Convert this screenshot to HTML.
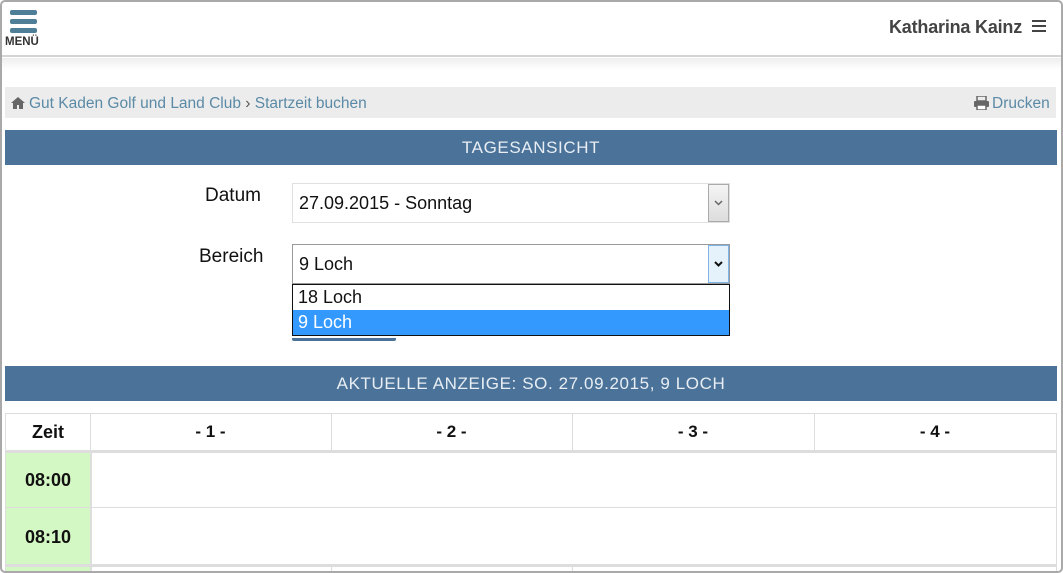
<!DOCTYPE html>
<html><head><meta charset="utf-8"><style>
*{box-sizing:border-box;margin:0;padding:0}
body{width:1063px;height:573px;overflow:hidden;background:#fff;font-family:"Liberation Sans","DejaVu Sans",sans-serif;position:relative}
.frame{position:absolute;left:0;top:0;width:1063px;height:573px;border:2px solid #a9a9a9;border-radius:5px;pointer-events:none;z-index:10}
.a{position:absolute}
.bar{background:#4b7399;color:#e8eef4;text-align:center;font-size:17px;letter-spacing:0.6px}
.sel{position:absolute;background:#fff;font-size:18px;color:#111;padding-left:6px}
.tc{position:absolute;font-weight:bold;font-size:17px;color:#111;text-align:center}
</style></head><body>
<div class="frame"></div>
<div class="a" style="left:0;top:0;width:1063px;height:57px;border-bottom:2px solid #d4d4d4"></div>
<div class="a" style="left:0;top:58px;width:1063px;height:12px;background:linear-gradient(#eee,#fff)"></div>
<div class="a" style="left:10px;top:10px;width:27px;height:5px;background:#4f7f96;border-radius:2px"></div>
<div class="a" style="left:10px;top:19px;width:27px;height:5px;background:#4f7f96;border-radius:2px"></div>
<div class="a" style="left:10px;top:28px;width:27px;height:5px;background:#4f7f96;border-radius:2px"></div>
<div class="a" style="left:5px;top:36px;font-size:11.5px;font-weight:bold;color:#333">MENÜ</div>
<div class="a" style="left:889px;top:17px;font-size:18px;font-weight:bold;color:#444;letter-spacing:-0.2px">Katharina Kainz</div>
<div class="a" style="left:1032px;top:20px;width:14px;height:2px;background:#444;box-shadow:0 5px 0 #444,0 10px 0 #444"></div>
<div class="a" style="left:5px;top:87px;width:1051px;height:31px;background:#ececec"></div>
<svg class="a" style="left:11px;top:97px" width="14" height="12" viewBox="0 0 14 12"><path d="M7 0L0 6h2v6h4V8h2v4h4V6h2z" fill="#666"/></svg>
<div class="a" style="left:29px;top:95px;font-size:15.5px;color:#5b8aa6">Gut Kaden Golf und Land Club <span style="color:#555">›</span> Startzeit buchen</div>
<svg class="a" style="left:974px;top:96px" width="15" height="14" viewBox="0 0 15 14"><rect x="3" y="0" width="9" height="5" fill="none" stroke="#666" stroke-width="1.5"/><rect x="0" y="5" width="15" height="6" rx="1" fill="#666"/><rect x="3" y="9" width="9" height="5" fill="#fff" stroke="#666" stroke-width="1.5"/></svg>
<div class="a" style="left:992px;top:95px;font-size:15.5px;color:#5b8aa6">Drucken</div>
<div class="a bar" style="left:5px;top:130px;width:1052px;height:35px;line-height:35px">TAGESANSICHT</div>
<div class="a" style="left:205px;top:185px;font-size:19px;color:#111">Datum</div>
<div class="a" style="left:199px;top:246px;font-size:19px;color:#111">Bereich</div>
<div class="sel" style="left:292px;top:183px;width:438px;height:40px;border:1px solid #e0e0e0;line-height:38px">27.09.2015 - Sonntag</div>
<div class="a" style="left:708px;top:184px;width:21px;height:38px;background:linear-gradient(#f4f4f4,#ddd);border:1px solid #aaa"><svg width="19" height="36"><path d="M6 16l3.5 3.5L13 16" fill="none" stroke="#666" stroke-width="1.5"/></svg></div>
<div class="sel" style="left:292px;top:244px;width:438px;height:40px;border:1px solid #999;line-height:38px">9 Loch</div>
<div class="a" style="left:708px;top:245px;width:21px;height:38px;background:#e5f1fb;border:1px solid #7eb4ea"><svg width="19" height="36"><path d="M6 16l3.5 3.5L13 16" fill="none" stroke="#111" stroke-width="2"/></svg></div>
<div class="a" style="left:292px;top:338px;width:104px;height:3px;background:#4b7399;border-radius:0 0 2px 2px"></div>
<div class="a" style="left:292px;top:284px;width:438px;height:52px;border:1px solid #111;background:#fff">
<div style="height:25px;line-height:25px;padding-left:5px;font-size:18px;color:#111">18 Loch</div>
<div style="height:25px;line-height:25px;padding-left:5px;font-size:18px;color:#fff;background:#3399ff">9 Loch</div>
</div>
<div class="a bar" style="left:5px;top:366px;width:1052px;height:35px;line-height:35px">AKTUELLE ANZEIGE: SO. 27.09.2015, 9 LOCH</div>
<div class="a" style="left:5px;top:413px;width:1052px;height:40px;border:1px solid #ddd;border-bottom:3px solid #ddd"></div>
<div class="a" style="left:90px;top:413px;width:1px;height:38px;background:#ddd"></div>
<div class="a" style="left:331px;top:413px;width:1px;height:38px;background:#ddd"></div>
<div class="a" style="left:572px;top:413px;width:1px;height:38px;background:#ddd"></div>
<div class="a" style="left:814px;top:413px;width:1px;height:38px;background:#ddd"></div>
<div class="tc" style="left:6px;top:422px;width:84px;font-size:18px">Zeit</div>
<div class="tc" style="left:90px;top:422px;width:241px">- 1 -</div>
<div class="tc" style="left:331px;top:422px;width:241px">- 2 -</div>
<div class="tc" style="left:572px;top:422px;width:242px">- 3 -</div>
<div class="tc" style="left:814px;top:422px;width:242px">- 4 -</div>
<div class="a" style="left:6px;top:453px;width:84px;height:120px;background:#d4f8c4"></div>
<div class="a" style="left:90px;top:453px;width:2px;height:120px;background:#ddd"></div>
<div class="a" style="left:1056px;top:413px;width:1px;height:160px;background:#ddd"></div>
<div class="a" style="left:5px;top:413px;width:1px;height:160px;background:#ddd"></div>
<div class="a" style="left:5px;top:507px;width:1052px;height:1px;background:#ddd"></div>
<div class="a" style="left:5px;top:564px;width:1052px;height:3px;background:#ddd"></div>
<div class="a" style="left:331px;top:567px;width:1px;height:6px;background:#ddd"></div>
<div class="a" style="left:572px;top:567px;width:1px;height:6px;background:#ddd"></div>
<div class="tc" style="left:6px;top:470px;width:84px;font-size:18px">08:00</div>
<div class="tc" style="left:6px;top:527px;width:84px;font-size:18px">08:10</div>
</body></html>
